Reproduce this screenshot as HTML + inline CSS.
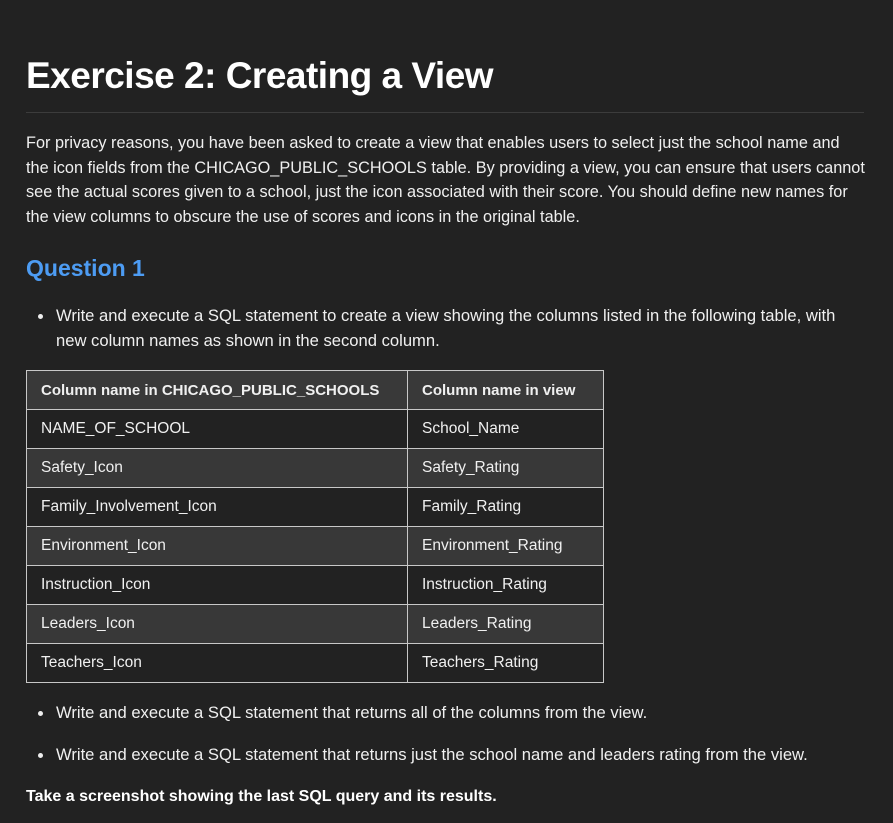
<!DOCTYPE html>
<html><head><meta charset="utf-8"><style>
html,body{margin:0;padding:0;background:#222222;width:893px;height:823px;overflow:hidden;color:#f0f0f0;font-family:"Liberation Sans",sans-serif;}
.a{position:absolute;white-space:nowrap;}
h1{position:absolute;left:26px;top:55px;margin:0;font-size:37px;font-weight:bold;color:#fff;letter-spacing:-0.5px;white-space:nowrap;}
.rule{position:absolute;left:26px;top:112px;width:838px;height:1px;background:#3c3c3c;}
.p{font-size:16.3px;line-height:24.6px;left:26px;}
.q{left:26px;top:255px;font-size:23px;font-weight:bold;color:#4d9cf3;}
.li{font-size:16.6px;line-height:25px;left:56px;}
.dot{position:absolute;width:5px;height:5px;border-radius:50%;background:#eee;left:38px;}
table{position:absolute;left:26px;top:370px;border-collapse:collapse;font-size:15.5px;}
td,th{border:1px solid #c8c8c8;height:39px;padding:0 14px;text-align:left;white-space:nowrap;box-sizing:border-box;}
th{font-weight:bold;background:#393939;height:39px;font-size:15px;}
tr.alt td{background:#383838;}
td.c1,th.c1{width:381px;}
td.c2,th.c2{width:196px;}
</style></head><body>
<h1>Exercise 2: Creating a View</h1>
<div class="rule"></div>
<div class="a p" style="top:131px">For privacy reasons, you have been asked to create a view that enables users to select just the school name and<br>the icon fields from the CHICAGO_PUBLIC_SCHOOLS table. By providing a view, you can ensure that users cannot<br>see the actual scores given to a school, just the icon associated with their score. You should define new names for<br>the view columns to obscure the use of scores and icons in the original table.</div>
<div class="a q">Question 1</div>
<div class="dot" style="top:314px"></div>
<div class="a li" style="top:303px">Write and execute a SQL statement to create a view showing the columns listed in the following table, with<br>new column names as shown in the second column.</div>
<table>
<tr><th class="c1">Column name in CHICAGO_PUBLIC_SCHOOLS</th><th class="c2">Column name in view</th></tr>
<tr><td class="c1">NAME_OF_SCHOOL</td><td class="c2">School_Name</td></tr>
<tr class="alt"><td>Safety_Icon</td><td>Safety_Rating</td></tr>
<tr><td>Family_Involvement_Icon</td><td>Family_Rating</td></tr>
<tr class="alt"><td>Environment_Icon</td><td>Environment_Rating</td></tr>
<tr><td>Instruction_Icon</td><td>Instruction_Rating</td></tr>
<tr class="alt"><td>Leaders_Icon</td><td>Leaders_Rating</td></tr>
<tr><td>Teachers_Icon</td><td>Teachers_Rating</td></tr>
</table>
<div class="dot" style="top:711px"></div>
<div class="a li" style="top:700px">Write and execute a SQL statement that returns all of the columns from the view.</div>
<div class="dot" style="top:753px"></div>
<div class="a li" style="top:742px">Write and execute a SQL statement that returns just the school name and leaders rating from the view.</div>
<div class="a p" style="top:785px;font-weight:bold;color:#fff;font-size:16px">Take a screenshot showing the last SQL query and its results.</div>
</body></html>
